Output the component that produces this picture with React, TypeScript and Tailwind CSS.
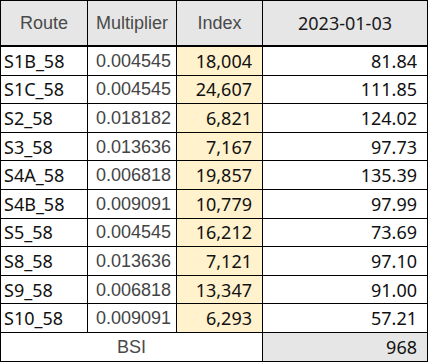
const rows = [
  { route: "S1B_58", mult: "0.004545", index: "18,004", value: "81.84" },
  { route: "S1C_58", mult: "0.004545", index: "24,607", value: "111.85" },
  { route: "S2_58", mult: "0.018182", index: "6,821", value: "124.02" },
  { route: "S3_58", mult: "0.013636", index: "7,167", value: "97.73" },
  { route: "S4A_58", mult: "0.006818", index: "19,857", value: "135.39" },
  { route: "S4B_58", mult: "0.009091", index: "10,779", value: "97.99" },
  { route: "S5_58", mult: "0.004545", index: "16,212", value: "73.69" },
  { route: "S8_58", mult: "0.013636", index: "7,121", value: "97.10" },
  { route: "S9_58", mult: "0.006818", index: "13,347", value: "91.00" },
  { route: "S10_58", mult: "0.009091", index: "6,293", value: "57.21" },
];

const cols = "grid grid-cols-[87px_89px_86px_164px]";
const arial = "font-['Liberation_Sans',Arial,sans-serif]";
const segoe = "font-['Noto_Sans','Open_Sans',sans-serif]";

export default function App() {
  return (
    <div className="h-[363px] w-[428px] bg-white">
      <div className="w-[428px] border border-black text-[18px] leading-none">
        {/* header */}
        <div className={`${cols} h-[46px] border-b-2 border-black bg-[#e6e6e6]`}>
          <div className={`flex items-center justify-center border-r border-black text-[#4a4a4a] ${arial}`}>Route</div>
          <div className={`flex items-center justify-center border-r border-black text-[#4a4a4a] ${arial}`}>Multiplier</div>
          <div className={`flex items-center justify-center border-r border-black text-[#4a4a4a] ${arial}`}>Index</div>
          <div className={`flex items-center justify-center text-[#1a1a1a] ${segoe}`}>2023-01-03</div>
        </div>

        {rows.map((r) => (
          <div key={r.route} className={`${cols} h-[28.6px] border-b border-black`}>
            <div className={`flex items-center border-r border-black pl-[3px] text-[#111] ${segoe}`}>{r.route}</div>
            <div className={`flex items-center justify-end border-r border-black pr-[5px] text-[#444] ${arial}`}>{r.mult}</div>
            <div className={`flex items-center justify-end border-r border-black bg-[#fff2cc] pr-[10px] text-[#111] ${segoe}`}>
              {r.index}
            </div>
            <div className={`flex items-center justify-end pr-[10px] text-[#111] ${segoe}`}>{r.value}</div>
          </div>
        ))}

        {/* total */}
        <div className="grid h-[28px] grid-cols-[262px_164px]">
          <div className={`flex items-center justify-center border-r border-black text-[#4a4a4a] ${arial}`}>BSI</div>
          <div className={`flex items-center justify-end bg-[#e6e6e6] pr-[10px] text-[#111] ${segoe}`}>968</div>
        </div>
      </div>
    </div>
  );
}
